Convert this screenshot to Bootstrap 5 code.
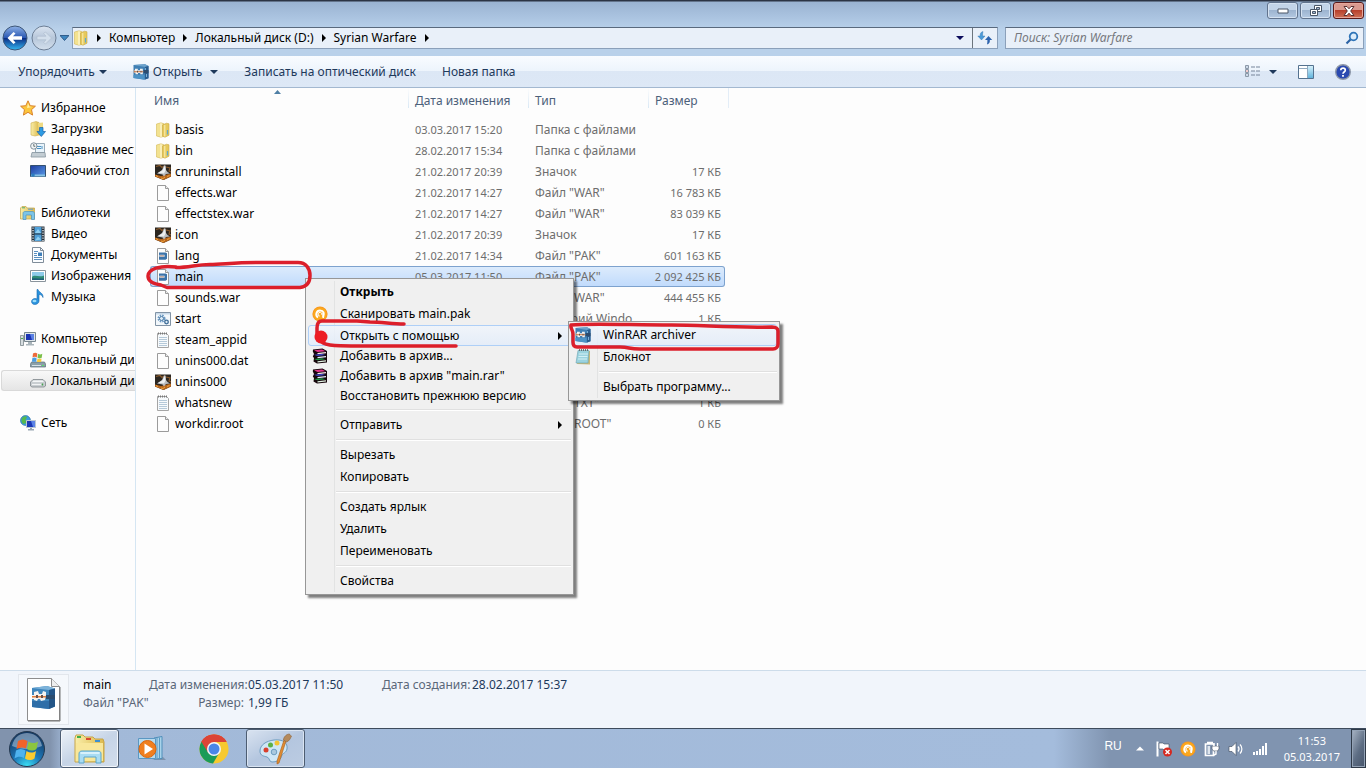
<!DOCTYPE html>
<html lang="ru">
<head>
<meta charset="utf-8">
<meta name="viewport" content="width=device-width, initial-scale=1">
<title>Syrian Warfare</title>
<link href="https://cdn.jsdelivr.net/npm/bootstrap@5.3.0/dist/css/bootstrap.min.css" rel="stylesheet">
<style>
  body { font-family: "Noto Sans", "Open Sans", sans-serif; font-size: 12px; line-height: 20px; background: #fdfdfd; color: #000; }
  svg { flex: none; display: block; }
  button { font: inherit; color: inherit; }
  .num { font-size: 11px; }

  .frame { height: 56px; background: linear-gradient(#2c3444 0 1px, #9ab3d1 2px, #a9c2df 16px, #b9d1ea 30px, #b9d1ea); }
  .win-btns { gap: 2px; padding: 2px 2px 0; }
  .win-btn { width: 31px; height: 17px; border: 1px solid #61738d; border-radius: 3px; background: linear-gradient(#c3d4e8 0 45%, #9db4d0 50%, #b4c9e2); box-shadow: inset 0 0 0 1px #d5e2f1; }
  .win-close { border-color: #5a1a1a; background: linear-gradient(#d99a90 0 45%, #b8402c 50%, #cf7258); box-shadow: inset 0 0 0 1px #e6a79b; }
  .nav-row { padding: 0 2px 5px; gap: 3px; }
  .field-box { height: 22px; background: #e9f0f9; border: 1px solid #8ba0ba; border-top-color: #59697d; }
  .crumb { color: #000; text-decoration: none; }
  .crumbs { gap: 8px; }
  .search-box { width: 359px; }
  .search-box input { background: none; border: 0; outline: 0; font-style: italic; height: 20px; }
  .search-box input::placeholder { color: #76797e; opacity: 1; }
  .round-nav { width: 26px; height: 26px; }

  .tools { height: 32px; padding: 0 15px 0 18px; gap: 26px; color: #1e395b; background: linear-gradient(#f9fcff, #edf4fc 48%, #dce7f5 50%, #dde8f6); border-bottom: 1px solid #a3b8d0; }
  .tools-right { gap: 21px; }
  .plain { background: none; border: 0; padding: 0; }

  .tree { width: 136px; border-right: 1px solid #d5e6f3; overflow: hidden; padding-top: 9px; }
  .tree a { height: 21px; color: #000; text-decoration: none; white-space: nowrap; overflow: hidden; border: 1px solid transparent; padding-left: 19px; gap: 5px; }
  .tree a.leaf { padding-left: 29px; }
  .tree a.current { margin-left: 1px; padding-left: 28px; background: linear-gradient(#f8f8f8, #e5e5e5); border-color: #d9d9d9; border-radius: 3px 0 0 3px; border-right: 0; }
  .tree-group { margin-bottom: 21px; }

  .files { width: 575px; margin-left: 14px; table-layout: fixed; border-collapse: separate; border-spacing: 0; line-height: 20px; }
  .files th { height: 31px; font-weight: 400; color: #4c607a; padding: 3px 0 0 7px; vertical-align: top; position: relative; background: linear-gradient(#fdfdfd, #d9e8f5) no-repeat 0 0 / 1px 20px; }
  .files th:first-child { padding-left: 4px; background: none; }
  .files th:last-child::after { content: ""; position: absolute; top: 0; right: -4px; width: 1px; height: 20px; background: #e3edf7; }
  .files td { height: 21px; padding: 0 0 0 7px; color: #6d6d6d; white-space: nowrap; overflow: hidden; }
  .files td:first-child { padding-left: 5px; color: #000; }
  .files td:last-child { padding: 0 4px 0 0; text-align: right; }
  .picked td { background: linear-gradient(#dcebfc, #c1dbfc); border: solid #7da2ce; border-width: 1px 0; line-height: 18px; }
  .picked td:first-child { border-left-width: 1px; padding-left: 4px; border-radius: 3px 0 0 3px; }
  .picked td:last-child { border-right-width: 1px; border-radius: 0 3px 3px 0; padding-right: 3px; }
  .sort-mark { position: absolute; left: 124px; top: 2px; }

  .ctx { --bs-dropdown-min-width: 0; border: 1px solid #979797; border-radius: 0; padding: 2px; font-size: 12px; color: #000; background: linear-gradient(#e2e3e3, #e2e3e3) no-repeat 28px 2px / 1px calc(100% - 4px), #f0f0f0; box-shadow: 3px 3px 2px rgba(0,0,0,.5); }
  .ctx-main { left: 305px; top: 190px; width: 269px; }
  .ctx-sub { left: 568px; top: 233px; width: 212px; z-index: 1001; }
  .ctx button { height: 22px; width: 100%; border: 1px solid transparent; border-radius: 3px; background: none; padding: 0 8px 0 3px; display: flex; align-items: center; white-space: nowrap; }
  .ctx .short button { height: 20px; }
  .ctx .lit button { height: 21px; border-color: #aecff7; background: linear-gradient(rgba(240,245,252,.8), rgba(226,236,250,.8)); }
  .ctx-sub .lit button { height: 22px; }
  .ctx .slot { width: 16px; margin-right: 12px; flex: none; }
  .ctx hr { margin: 3px 0 3px 28px; border: 0; height: 2px; opacity: 1; background: linear-gradient(#e0e0e0 0 1px, #fff 1px); }
  .ink { left: 0; top: 0; z-index: 1002; pointer-events: none; }

  .details { height: 58px; background: #f1f5fb; border-top: 1px solid #cddcea; color: #1e395b; }
  .details dt { font-weight: 400; color: #5a6779; text-align: right; white-space: nowrap; }
  .details dd { margin: 0; white-space: nowrap; }
  .details dl { display: grid; column-gap: 4px; grid-auto-rows: 18px; line-height: 18px; margin: 5px 0 0; }
  .dates-a { grid-template-columns: 95px 86px; }
  .dates-b { grid-template-columns: 86px auto; }
  .preview { width: 51px; height: 51px; margin: 3px 0 0 18px; border: 1px solid #e2e6ec; background: #f5f8fc; }
  .file-id { width: 66px; margin: 5px 0 0 14px; line-height: 18px; white-space: nowrap; }
  .file-kind { color: #5a6779; }

  .taskbar { height: 40px; border-top: 1px solid #3e4b5c; background: linear-gradient(90deg, #8193ad 0 50px, #a2b9d8 66px, #a4bcdc calc(100% - 312px), #8094b0 calc(100% - 256px), #8094b0); }
  .start { margin: 0 14px 0 8px; }
  .task { width: 59px; height: 39px; border: 0; background: none; padding: 0; display: flex; align-items: center; justify-content: center; }
  .task.open { border: 1px solid #4d5d72; border-radius: 3px; background: linear-gradient(150deg, #eef3f9, #c6d4e6 50%, #d3deec); box-shadow: inset 0 0 0 1px #f2f6fb; }
  .task.other { background: linear-gradient(150deg, #d9e3f0, #b4c6df 50%, #bccce2); box-shadow: inset 0 0 0 1px #d9e4f2; }
  .tasks { gap: 3px; }
  .tray { color: #fff; }
  .lang-mark { font-family: "Liberation Sans", sans-serif; margin: 0 6px 5px 0; }
  .clock { line-height: 16px; margin: 0 3px 0 8px; }
  .peek { width: 15px; height: 39px; border: 1px solid #2f3a48; background: linear-gradient(115deg, #a9b5c5, #5d6d83 55%, #46546a); box-shadow: inset 0 0 0 1px #94a3b6; padding: 0; }
</style>
</head>
<body class="vh-100 d-flex flex-column overflow-hidden">

<svg width="0" height="0" class="position-absolute" aria-hidden="true">
  <defs>
    <linearGradient id="gFold" x1="0" x2="1"><stop offset="0" stop-color="#f9eea9"/><stop offset="1" stop-color="#dcb94c"/></linearGradient>
    <linearGradient id="gScreen" x1="0" x2="1" y2="1"><stop offset="0" stop-color="#1c3ba0"/><stop offset="1" stop-color="#5b9de8"/></linearGradient>
    <linearGradient id="gGlass" x2="0" y2="1"><stop offset="0" stop-color="#d6f1fb"/><stop offset="1" stop-color="#62b4dc"/></linearGradient>
    <linearGradient id="gBall" x2="0" y2="1"><stop offset="0" stop-color="#8fb2e6"/><stop offset=".48" stop-color="#2b59b4"/><stop offset=".52" stop-color="#0b2f86"/><stop offset="1" stop-color="#35b8f2"/></linearGradient>
    <linearGradient id="gPale" x2="0" y2="1"><stop offset="0" stop-color="#dbe5f1"/><stop offset=".5" stop-color="#b7c7da"/><stop offset="1" stop-color="#d4e0ed"/></linearGradient>
    <radialGradient id="gOrb" cx=".5" cy="1" r=".9"><stop offset="0" stop-color="#3ce4f8"/><stop offset=".45" stop-color="#1e78b8"/><stop offset="1" stop-color="#143b66"/></radialGradient>
  </defs>
  <symbol id="folder" viewBox="0 0 16 16"><path d="M1.500 2 6 .8l3 1v12.400l-3 1-4.500-1.200z" fill="#f3e290" stroke="#d5ba58" stroke-width=".6"/><path d="M6 1.200V15" stroke="#fffbe0"/><path d="M7.500 3l4-1.800 2.500.6v11.400l-4 2-2.500-1z" fill="#e6c95c" stroke="#c9a845" stroke-width=".6"/><path d="M12.500 8v4.500" stroke="#5ea9d0" stroke-width="1.200"/><path d="M9.800 3v11.500" stroke="#fbf0b5"/></symbol>
  <symbol id="page" viewBox="0 0 16 16"><path d="M2.500.5h8l3 3v12h-11z" fill="#fdfdfd" stroke="#9b9b9b"/><path d="M10.500.5v3h3" fill="#ececec" stroke="#9b9b9b"/></symbol>
  <symbol id="rar" viewBox="0 0 16 16"><path d="M.5 1 12 .3l3.500 1.700v12.300l-4 1.500L.5 14z" fill="#3f7fb3"/><path d="M.5 1 12 .3l3.500 1.700-3.500 1z" fill="#6da3cc"/><path d="M.5 11h11v4.500L.5 14z" fill="#4c93c6"/><path d="M12 3l3.500-1v12.300l-3.500 1.200z" fill="#2a5d8f"/><path d="M.5 6h2v3h-2z" fill="#b9aca6"/><path d="M2 4.800h2.800v1.500H7V4.800h2.800v5.400H7.300V9H5v1.200H2.500V8.500H2z" fill="#f3f1ef"/><path d="M1 7.200h9.500v1H1z" fill="#c77a48"/><path d="M4 6.800h1v1.600H4zM7.500 6.800h1v1.600h-1z" fill="#5e4a44"/><path d="M10.500 6h5v3.200h-5z" fill="#2c4c6e"/><path d="M12.500 4v2M13.500 10v3" stroke="#79aed4"/></symbol>
  <symbol id="pak" viewBox="0 0 16 16"><use href="#page"/><path d="M4 4.500h6.500l1.500.8v5.500l-1.500 1H4z" fill="#3c73a8"/><path d="M4.500 6.800h5v2h-5z" fill="#fff"/><path d="M5 7.500h4v.8H5z" fill="#8a5a48"/></symbol>
  <symbol id="jet" viewBox="0 0 16 16"><path d="M0 .5h16v12l-7.500 3.500L0 12.500z" fill="#2b2620"/><path d="M0 10.500l6 1.500 10-2.500v3l-7.500 3.500L0 12.500z" fill="#b5651d"/><path d="M1 2.500l4-1 2 2 3-2M11 3l4 1-1 3 2 1" stroke="#8a5a2c" stroke-width="1.200" fill="none"/><path d="M2 9.500 7 6l2-4.500h1.500L11 6l1.500 2L15 9.500 11 10l-2 2.500L7.500 10.500z" fill="#b9bcc0"/><path d="M3 9l4.500-2.800 2-4h.8l.2 4.500L9 9.500z" fill="#eceeef"/><path d="M1 11.500l2 1.200M12 12.500l2.500-1M6 14l2 .5 2-1.500" stroke="#f2a33a" fill="none"/></symbol>
  <symbol id="script" viewBox="0 0 16 16"><path d="M.5 1.500h15v13H.5z" fill="#f2f7fb" stroke="#8193a5"/><path d="M1 2h14v1.500H1z" fill="#c7d8e8"/><circle cx="6.500" cy="7.500" r="3" fill="none" stroke="#6b9ac4" stroke-width="2" stroke-dasharray="1.500 .9"/><circle cx="6.500" cy="7.500" r="2" fill="#dcebf6" stroke="#4d7ba6"/><circle cx="11.500" cy="11" r="1.800" fill="#dcebf6" stroke="#3d6b96" stroke-width="1.300"/></symbol>
  <symbol id="note" viewBox="0 0 16 16"><path d="M2.500 1.500h9l2 2v12h-11z" fill="#f7fafc" stroke="#a5a5a5"/><path d="M3 1.500h9" stroke="#777" stroke-dasharray="1 1" stroke-width="2"/><path d="M4 5.500h8M4 7.500h8M4 9.500h8M4 11.500h8M4 13.500h8" stroke="#b5c9d9"/></symbol>
  <symbol id="notepad" viewBox="0 0 16 16"><path d="M4 2h11v13.500L2 15z" fill="#c9b878"/><path d="M3 1.500h11L13 14H1z" fill="#9bd3df" stroke="#6aa3b0" stroke-width=".6"/><path d="M4 1h10" stroke="#555" stroke-width="1.500" stroke-dasharray="1 1"/><path d="M4 5h9M3.500 7.500h9M3 10h9" stroke="#d3f0f5"/></symbol>
  <symbol id="star" viewBox="0 0 16 16"><path d="M8 .8l2.200 4.900 5.200.5-3.900 3.500 1.100 5.400L8 12.300l-4.600 2.800 1.100-5.400L.6 6.200l5.200-.5z" fill="#fcc63c" stroke="#d9822b"/><path d="M8 3l1.300 3.600 3 .3-5.300 1z" fill="#fff0a8"/></symbol>
  <symbol id="down" viewBox="0 0 16 16"><path d="M1 2l5-1.500 3 1V14l-4 1-4-1z" fill="url(#gFold)" stroke="#cfae4b" stroke-width=".6"/><path d="M8 2l5-.5v12l-4 1.500z" fill="#efda83"/><path d="M9.500 6.500h3.500v4h2.500l-4.200 5L7 10.500h2.500z" fill="#2e9be3" stroke="#1a62a8" stroke-width=".7"/></symbol>
  <symbol id="recent" viewBox="0 0 16 16"><path d="M5.500 1.500h9v9h-9z" fill="#e9f4fb" stroke="#97aab8"/><path d="M7 4.500h4M7 6.500h4M12 4v3" stroke="#4c93c4"/><path d="M2 10.500h13l.5 4.500H1z" fill="#c3cdd3" stroke="#8796a0" stroke-width=".8"/><circle cx="3.800" cy="4" r="3.200" fill="#f1f4f6" stroke="#84929c"/><path d="M3.800 2v2.300h1.500" stroke="#455" fill="none" stroke-width=".8"/></symbol>
  <symbol id="desk" viewBox="0 0 16 16"><path d="M.5 2.500h15v11H.5z" fill="url(#gScreen)" stroke="#33506f"/><path d="M1 11.500h14v2H1z" fill="#87c3e5"/><circle cx="3" cy="12" r="1.800" fill="#2d7dc0"/></symbol>
  <symbol id="lib" viewBox="0 0 16 16"><path d="M.5 3 2 1.500h4L7 3h7.500v11H.5z" fill="url(#gFold)" stroke="#c2a348" stroke-width=".7"/><path d="M2 2.800h3" stroke="#4fa86b"/><path d="M8 4.200h5" stroke="#5e9ad0"/><path d="M3 8.500c0-1.500 1-2 2-2h7c1.500 0 2.500.5 2.500 2v6h-3V10H6v4.500H3z" fill="#7cc4e8" stroke="#4d94bd" stroke-width=".7"/></symbol>
  <symbol id="film" viewBox="0 0 16 16"><path d="M1.500.5h13v15h-13z" fill="#26303a"/><path d="M4.500 1h7v6.500h-7zM4.500 8.500h7V15h-7z" fill="#4f9fd8"/><path d="M5 7l3-4 3 4zM5 14.500l3-4 3 3z" fill="#8fd0f2"/><path d="M3 1.500V15M13 1.500V15" stroke="#e9eef2" stroke-width="1.300" stroke-dasharray="1.300 1.200"/></symbol>
  <symbol id="doc" viewBox="0 0 16 16"><path d="M2.500.5h8l3 3v12h-11z" fill="#fbfdff" stroke="#7f8c99"/><path d="M10.500.5v3h3" fill="none" stroke="#7f8c99"/><path d="M4 4.500h4M4 6.500h3M4 8.500h3M4 10.500h8M4 12.500h8" stroke="#5a8fbf"/><path d="M8 5.500h4v3.500H8z" fill="#3f7fb9"/></symbol>
  <symbol id="pic" viewBox="0 0 16 16"><path d="M.5 2.500h15v11H.5z" fill="#fff" stroke="#8a949c"/><path d="M2 4h12v8H2z" fill="#8ecbe9"/><path d="M2 9c3-3 7 1 12-1.500V12H2z" fill="#2f8c76"/><path d="M2 10.500c4-1 8 .5 12 0V12H2z" fill="#1e5d79"/></symbol>
  <symbol id="music" viewBox="0 0 16 16"><path d="M8 .5c1 3 5.500 3.500 5 8-1-2.500-2.500-3-4-3v6.500c0 2-2 3.500-4.200 3.500S1.500 14 1.500 12.500 3 9.500 5 9.500c1 0 1.500.2 2 .5V.5z" fill="#2b93dd" stroke="#1668b0" stroke-width=".6"/><ellipse cx="4.500" cy="12" rx="2" ry="1.200" fill="#9bdcfa"/></symbol>
  <symbol id="pc" viewBox="0 0 16 16"><path d="M.5 4.500h3v10h-3z" fill="#d7dde0" stroke="#7b868c" stroke-width=".8"/><path d="M1 7.500h2" stroke="#48b04c"/><path d="M4.500 1.500h11v9h-11z" fill="#dfe6ea" stroke="#78868f"/><path d="M6 3h8v6H6z" fill="#1c34b4"/><path d="M10 3h4v6h-2z" fill="#5a80e4"/><path d="M8 11h4v2h2v1.500H6V13h2z" fill="#aab5bb"/></symbol>
  <symbol id="windrive" viewBox="0 0 16 16"><path d="M1.500 10h13l1 2v3H.5v-3z" fill="#8ba0a8" stroke="#5d6f78" stroke-width=".7"/><path d="M2 13.500h9" stroke="#d6e3e8"/><path d="M12 13.500h2" stroke="#59e06b"/><path d="M3 1.500c1.500-1 3-1 4.300 0L6.800 5.500c-1.500-1-2.800-.8-4.300 0z" fill="#ee6b3b"/><path d="M8 1.800c1.500.9 2.800.8 4.300 0l-.6 4c-1.500.8-2.800.8-4.200 0z" fill="#7cc04a"/><path d="M2.300 6.200c1.500-.8 3-.8 4.400.2l-.5 3.300H2z" fill="#4a9de0"/><path d="M7.400 6.500c1.500.8 2.800.8 4.200 0l-.5 3.500H7z" fill="#f8ca3d"/></symbol>
  <symbol id="drive" viewBox="0 0 16 16"><path d="M.5 9 3 6.500h10L15.500 9v4L14 14H2L.5 13z" fill="#c9ced1" stroke="#7f868b" stroke-width=".8"/><path d="M2 9l1.500-1.500h9L14 9z" fill="#f4f6f7"/><path d="M2 11.500h9" stroke="#f1f3f4"/><path d="M12.500 10.500v2" stroke="#46a14e" stroke-width="1.400"/></symbol>
  <symbol id="net" viewBox="0 0 16 16"><circle cx="5.500" cy="5.500" r="5" fill="#3a9bdc" stroke="#2368a0" stroke-width=".6"/><path d="M2 3c2-2 4-2 5-1L5.500 5l1 3-3 1C1.500 8 1 5 2 3z" fill="#55b94d"/><path d="M6.500 5.500h9v7h-9z" fill="#1b38b5" stroke="#bcc8d2"/><path d="M11 6h4v6h-2z" fill="#5b83e6"/><path d="M10 13h2v1h2v1.500H8V14h2z" fill="#9aa8b3"/></symbol>
  <symbol id="avast" viewBox="0 0 16 16"><circle cx="8" cy="8" r="7.600" fill="#f7941d"/><circle cx="8" cy="8" r="6.800" fill="#fba81e"/><path d="M6 11.500C3 9.500 4.200 4.500 8 4.500s4.500 3 3.200 6.500" fill="none" stroke="#fff" stroke-width="2"/><path d="M11.200 7v5" stroke="#fff" stroke-width="1.600"/><path d="M9.800 8.800a1.900 1.900 0 1 0-2 1.300" fill="none" stroke="#fff" stroke-width="1"/></symbol>
  <symbol id="books" viewBox="0 0 16 16"><path d="M1 1.500 10.500.5 15 3v11.500l-10 1-3.500-2L2 10 .8 8.500 2 6 .8 3.500z" fill="#16060c"/><path d="M2 2.300 10 1.500l3.500 1.700-8 .8z" fill="#e0348a"/><path d="M5.500 5 14 4v1.300l-8.500 1z" fill="#f3e6ee"/><path d="M2 6.800 10 6l3.500 1-8 1z" fill="#3f48c8"/><path d="M5.500 9 14 8v1.300l-8.500 1z" fill="#e6e9fb"/><path d="M2 11l8-.8 3.500 1-8 1z" fill="#1f9a48"/><path d="M5.500 13.200 14 12.200v1.300l-8.500 1z" fill="#e3f3e4"/></symbol>
  <symbol id="caret" viewBox="0 0 8 4"><path d="M0 0h8L4 4z" fill="currentColor"/></symbol>
  <symbol id="tri" viewBox="0 0 4 8"><path d="M0 0v8l4-4z" fill="currentColor"/></symbol>
</svg>

<header class="frame d-flex flex-column">
  <div class="win-btns d-flex justify-content-end">
    <button class="win-btn d-flex align-items-center justify-content-center p-0" aria-label="Свернуть"><svg width="12" height="6"><path d="M1 1h10v4H1z" fill="#fff" stroke="#4a5768"/></svg></button>
    <button class="win-btn d-flex align-items-center justify-content-center p-0" aria-label="Восстановить"><svg width="12" height="11"><path d="M4.500.5h7v6h-7z" fill="#fff" stroke="#4a5768"/><path d="M6.500 2.500h3v2h-3z" fill="#9db4d0" stroke="#4a5768"/><path d="M.5 4.500h7v6h-7z" fill="#fff" stroke="#4a5768"/><path d="M2.500 6.500h3v2h-3z" fill="#9db4d0" stroke="#4a5768"/></svg></button>
    <button class="win-btn win-close d-flex align-items-center justify-content-center p-0" aria-label="Закрыть"><svg width="12" height="10"><path d="M1 .5h3l2 2.300L8 .5h3L7.700 5 11 9.500H8L6 7.200 4 9.500H1L4.300 5z" fill="#fff" stroke="#5b3030"/></svg></button>
  </div>
  <div class="nav-row d-flex align-items-center mt-auto">
    <button class="round-nav plain" aria-label="Назад"><svg width="26" height="26"><circle cx="13" cy="13" r="12" fill="url(#gBall)" stroke="#3d5677"/><path d="M5.500 13l6-6 2 1.500-2.500 2.700h9v3.600h-9l2.500 2.700-2 1.500z" fill="#fff"/></svg></button>
    <button class="round-nav plain" aria-label="Вперёд"><svg width="26" height="26"><circle cx="13" cy="13" r="12" fill="url(#gPale)" stroke="#6c7e95"/><path d="M20.500 13l-6-6-2 1.500 2.500 2.700H6v3.600h9l-2.500 2.700 2 1.500z" fill="#d3dfec" stroke="#b0bfd0" stroke-width=".7"/></svg></button>
    <button class="plain" aria-label="Последние страницы"><svg width="9" height="6"><path d="M0 .5h9L4.500 5.500z" fill="#3d86c0" stroke="#1f4a78" stroke-width=".8"/></svg></button>
    <div class="field-box d-flex align-items-center flex-grow-1">
      <svg width="16" height="16" class="me-1"><use href="#folder"/></svg>
      <nav class="crumbs d-flex align-items-center ms-1" aria-label="Адрес">
        <svg width="4" height="8"><use href="#tri"/></svg><a class="crumb" href="#">Компьютер</a>
        <svg width="4" height="8"><use href="#tri"/></svg><a class="crumb" href="#">Локальный диск (D:)</a>
        <svg width="4" height="8"><use href="#tri"/></svg><a class="crumb" href="#">Syrian Warfare</a>
        <svg width="4" height="8"><use href="#tri"/></svg>
      </nav>
      <button class="plain ms-auto me-1 pe-1" style="color:#0c0c5c" aria-label="История"><svg width="8" height="4"><use href="#caret"/></svg></button>
      <button class="plain border-start border-secondary px-1 h-100" aria-label="Обновить"><svg width="16" height="16"><path d="M6 1.500C3.500 2 3 4 3.200 6H.8l3.700 4L8 6H5.600c0-1.500 0-3 .4-4.500z" fill="#4a9ad8" stroke="#2f6fa8" stroke-width=".4"/><path d="M10 14.500c2.500-.5 3-2.500 2.800-4.500h2.400l-3.700-4L8 10h2.400c0 1.500 0 3-.4 4.500z" fill="#2c62ad"/></svg></button>
    </div>
    <div class="field-box search-box d-flex align-items-center ms-1">
      <input class="flex-grow-1 ps-2" type="search" aria-label="Поиск" placeholder="Поиск: Syrian Warfare">
      <svg width="14" height="14" class="me-1"><circle cx="8.500" cy="5.500" r="3.800" fill="#dcecfa" stroke="#2e74b8" stroke-width="1.800"/><path d="M5.500 8.500 1.500 12.500" stroke="#2a62a4" stroke-width="2.200"/></svg>
    </div>
  </div>
</header>

<div class="tools d-flex align-items-center">
  <button class="plain d-flex align-items-center">Упорядочить<svg width="8" height="4" class="ms-1"><use href="#caret"/></svg></button>
  <button class="plain d-flex align-items-center"><svg width="16" height="16" class="me-1"><use href="#rar"/></svg>Открыть<svg width="8" height="4" class="ms-2"><use href="#caret"/></svg></button>
  <button class="plain">Записать на оптический диск</button>
  <button class="plain">Новая папка</button>
  <div class="tools-right d-flex align-items-center ms-auto">
    <button class="plain d-flex align-items-center" aria-label="Вид"><svg width="16" height="13" class="me-2"><path d="M.5.5h3v3h-3zM.5 4.500h3v3h-3zM.5 8.500h3v3h-3z" fill="#fff" stroke="#8b98a8"/><path d="M1.500 2h1M1.500 10h1" stroke="#3b6ea5"/><path d="M1.500 6h1" stroke="#c33"/><path d="M6 2h4M11 2h4M6 6h4M11 6h4M6 10h4M11 10h4" stroke="#76859a"/></svg><svg width="8" height="4"><use href="#caret"/></svg></button>
    <button class="plain" aria-label="Область просмотра"><svg width="16" height="14"><path d="M.5.5h15v13H.5z" fill="#fff" stroke="#54728f"/><path d="M10 1h5v12h-5z" fill="url(#gGlass)"/><path d="M9.500 1v12M1 3.500h9" stroke="#8fa9bf"/></svg></button>
    <button class="plain" aria-label="Справка"><svg width="16" height="16"><circle cx="8" cy="8" r="7.300" fill="#2a49b0" stroke="#8e98a8" stroke-width="1.400"/><path d="M5.800 6.300C5.800 3.400 10.300 3.500 10.300 6.200 10.300 8 8 8 8 9.800" fill="none" stroke="#fff" stroke-width="1.700"/><path d="M8 11v1.800" stroke="#fff" stroke-width="1.800"/></svg></button>
  </div>
</div>

<main class="position-relative d-flex flex-grow-1" style="min-height:0">
  <nav class="tree flex-shrink-0" aria-label="Область переходов">
    <div class="tree-group">
      <a href="#" class="d-flex align-items-center"><svg width="16" height="16"><use href="#star"/></svg>Избранное</a>
      <a href="#" class="leaf d-flex align-items-center"><svg width="16" height="16"><use href="#down"/></svg>Загрузки</a>
      <a href="#" class="leaf d-flex align-items-center"><svg width="16" height="16"><use href="#recent"/></svg>Недавние места</a>
      <a href="#" class="leaf d-flex align-items-center"><svg width="16" height="16"><use href="#desk"/></svg>Рабочий стол</a>
    </div>
    <div class="tree-group">
      <a href="#" class="d-flex align-items-center"><svg width="16" height="16"><use href="#lib"/></svg>Библиотеки</a>
      <a href="#" class="leaf d-flex align-items-center"><svg width="16" height="16"><use href="#film"/></svg>Видео</a>
      <a href="#" class="leaf d-flex align-items-center"><svg width="16" height="16"><use href="#doc"/></svg>Документы</a>
      <a href="#" class="leaf d-flex align-items-center"><svg width="16" height="16"><use href="#pic"/></svg>Изображения</a>
      <a href="#" class="leaf d-flex align-items-center"><svg width="16" height="16"><use href="#music"/></svg>Музыка</a>
    </div>
    <div class="tree-group">
      <a href="#" class="d-flex align-items-center"><svg width="16" height="16"><use href="#pc"/></svg>Компьютер</a>
      <a href="#" class="leaf d-flex align-items-center"><svg width="16" height="16"><use href="#windrive"/></svg>Локальный диск (C:)</a>
      <a href="#" class="leaf current d-flex align-items-center"><svg width="16" height="16"><use href="#drive"/></svg>Локальный диск (D:)</a>
    </div>
    <div>
      <a href="#" class="d-flex align-items-center"><svg width="16" height="16"><use href="#net"/></svg>Сеть</a>
    </div>
  </nav>

  <div class="flex-grow-1">
    <table class="files">
      <colgroup><col style="width:258px"><col style="width:120px"><col style="width:120px"><col style="width:77px"></colgroup>
      <thead><tr><th>Имя<svg class="sort-mark" width="7" height="4"><path d="M0 4h7L3.500 0z" fill="#4f7fa5"/></svg></th><th>Дата изменения</th><th>Тип</th><th>Размер</th></tr></thead>
      <tbody>
        <tr><td><div class="d-flex align-items-center gap-1"><svg width="16" height="16"><use href="#folder"/></svg>basis</div></td><td class="num">03.03.2017 15:20</td><td>Папка с файлами</td><td class="num"></td></tr>
        <tr><td><div class="d-flex align-items-center gap-1"><svg width="16" height="16"><use href="#folder"/></svg>bin</div></td><td class="num">28.02.2017 15:34</td><td>Папка с файлами</td><td class="num"></td></tr>
        <tr><td><div class="d-flex align-items-center gap-1"><svg width="16" height="16"><use href="#jet"/></svg>cnruninstall</div></td><td class="num">21.02.2017 20:39</td><td>Значок</td><td class="num">17 КБ</td></tr>
        <tr><td><div class="d-flex align-items-center gap-1"><svg width="16" height="16"><use href="#page"/></svg>effects.war</div></td><td class="num">21.02.2017 14:27</td><td>Файл "WAR"</td><td class="num">16 783 КБ</td></tr>
        <tr><td><div class="d-flex align-items-center gap-1"><svg width="16" height="16"><use href="#page"/></svg>effectstex.war</div></td><td class="num">21.02.2017 14:27</td><td>Файл "WAR"</td><td class="num">83 039 КБ</td></tr>
        <tr><td><div class="d-flex align-items-center gap-1"><svg width="16" height="16"><use href="#jet"/></svg>icon</div></td><td class="num">21.02.2017 20:39</td><td>Значок</td><td class="num">17 КБ</td></tr>
        <tr><td><div class="d-flex align-items-center gap-1"><svg width="16" height="16"><use href="#pak"/></svg>lang</div></td><td class="num">21.02.2017 14:34</td><td>Файл "PAK"</td><td class="num">601 163 КБ</td></tr>
        <tr class="picked"><td><div class="d-flex align-items-center gap-1"><svg width="16" height="16"><use href="#pak"/></svg>main</div></td><td class="num">05.03.2017 11:50</td><td>Файл "PAK"</td><td class="num">2 092 425 КБ</td></tr>
        <tr><td><div class="d-flex align-items-center gap-1"><svg width="16" height="16"><use href="#page"/></svg>sounds.war</div></td><td class="num"></td><td>Файл "WAR"</td><td class="num">444 455 КБ</td></tr>
        <tr><td><div class="d-flex align-items-center gap-1"><svg width="16" height="16"><use href="#script"/></svg>start</div></td><td class="num"></td><td>Сценарий Windo</td><td class="num">1 КБ</td></tr>
        <tr><td><div class="d-flex align-items-center gap-1"><svg width="16" height="16"><use href="#note"/></svg>steam_appid</div></td><td></td><td></td><td></td></tr>
        <tr><td><div class="d-flex align-items-center gap-1"><svg width="16" height="16"><use href="#page"/></svg>unins000.dat</div></td><td></td><td></td><td></td></tr>
        <tr><td><div class="d-flex align-items-center gap-1"><svg width="16" height="16"><use href="#jet"/></svg>unins000</div></td><td></td><td></td><td></td></tr>
        <tr><td><div class="d-flex align-items-center gap-1"><svg width="16" height="16"><use href="#note"/></svg>whatsnew</div></td><td></td><td>Файл "TXT"</td><td class="num">1 КБ</td></tr>
        <tr><td><div class="d-flex align-items-center gap-1"><svg width="16" height="16"><use href="#page"/></svg>workdir.root</div></td><td></td><td>Файл "ROOT"</td><td class="num">0 КБ</td></tr>
      </tbody>
    </table>
  </div>

  <ul class="dropdown-menu show ctx ctx-main">
    <li><button class="fw-bold"><span class="slot"></span>Открыть</button></li>
    <li><button><span class="slot"><svg width="16" height="16"><use href="#avast"/></svg></span>Сканировать main.pak</button></li>
    <li class="lit"><button><span class="slot"></span>Открыть с помощью<svg width="4" height="8" class="ms-auto"><use href="#tri"/></svg></button></li>
    <li class="short"><button><span class="slot"><svg width="16" height="16"><use href="#books"/></svg></span>Добавить в архив...</button></li>
    <li class="short"><button><span class="slot"><svg width="16" height="16"><use href="#books"/></svg></span>Добавить в архив "main.rar"</button></li>
    <li class="short"><button><span class="slot"></span>Восстановить прежнюю версию</button></li>
    <li><hr></li>
    <li><button><span class="slot"></span>Отправить<svg width="4" height="8" class="ms-auto"><use href="#tri"/></svg></button></li>
    <li><hr></li>
    <li><button><span class="slot"></span>Вырезать</button></li>
    <li><button><span class="slot"></span>Копировать</button></li>
    <li><hr></li>
    <li><button><span class="slot"></span>Создать ярлык</button></li>
    <li><button><span class="slot"></span>Удалить</button></li>
    <li><button><span class="slot"></span>Переименовать</button></li>
    <li><hr></li>
    <li><button><span class="slot"></span>Свойства</button></li>
  </ul>
  <ul class="dropdown-menu show ctx ctx-sub">
    <li class="lit"><button><span class="slot"><svg width="16" height="16"><use href="#rar"/></svg></span>WinRAR archiver</button></li>
    <li><button><span class="slot"><svg width="16" height="16"><use href="#notepad"/></svg></span>Блокнот</button></li>
    <li><hr></li>
    <li><button><span class="slot"></span>Выбрать программу...</button></li>
  </ul>

  <!-- hand-drawn red marker strokes over the list and the menus -->
  <svg class="ink position-absolute" width="800" height="300" fill="none" stroke="#dc1f2b" stroke-width="3.500" stroke-linecap="round" stroke-linejoin="round">
    <path d="M176 179C160 177 148 181 148 188c0 6 6 8 13 9l6 2.500H300c7-1 10-6 10-12 0-7-4-13-12-13H258c-24 0-36 2-48 2-14 0-20 3-34 3"/>
    <path d="M404 236c-12 0-22-2-34-2l-13-1H322c-4 0-5 3-5 7v10l6 5c8 4 16 2 28 3h105"/>
    <ellipse cx="321" cy="249" rx="6.500" ry="6.500" fill="#ed1c24" stroke="none"/>
    <path d="M571 237c20-2 60 0 100 0 32 0 60 3 101 2 4 0 6 2 6 4v13c0 3-2 5-5 5H640c-12 0-10-2-20-2h-43c-3 0-4-2-4-5v-8c0-4-3-6-2-9z"/>
  </svg>
</main>

<footer class="details d-flex flex-shrink-0">
  <div class="preview d-flex align-items-center justify-content-center">
    <svg width="34" height="44"><path d="M.5.5h24l8 8v34H.5z" fill="#fff" stroke="#8d8d8d"/><path d="M1 43h32V9" stroke="#777" fill="none"/><path d="M24.500.5v8h8" fill="#eee" stroke="#8d8d8d"/><path d="M5 10l15-2 8 2.500v18L22 31 5 29z" fill="#3f86bd"/><path d="M5 10l15-2 8 2.500-6 1.500z" fill="#7db3da"/><path d="M22 12l6-1.500v18L22 31z" fill="#235587"/><path d="M5 23h17v8L5 29z" fill="#2e6ea8"/><path d="M5 17h2v4H5zM7 14l4-1 1 3h3l1-3 3 1v3l-1 5-4 1-1-2h-2l-1 2-3-1z" fill="#f4f2f0"/><path d="M5 18h14v1.500H5z" fill="#df7b3b"/><path d="M9 17h2v3H9zM14 17h2v3h-2z" fill="#6a5048"/><path d="M19 17h9v4h-9z" fill="#2c4c6e"/></svg>
  </div>
  <div class="file-id"><div class="text-black">main</div><div class="file-kind">Файл "PAK"</div></div>
  <dl class="dates-a"><dt>Дата изменения:</dt><dd>05.03.2017 11:50</dd><dt>Размер:</dt><dd>1,99 ГБ</dd></dl>
  <dl class="dates-b ms-5"><dt>Дата создания:</dt><dd>28.02.2017 15:37</dd></dl>
</footer>

<div class="taskbar d-flex align-items-center flex-shrink-0">
  <button class="plain start" aria-label="Пуск"><svg width="38" height="38"><circle cx="19" cy="19" r="17.500" fill="url(#gOrb)" stroke="#24384f"/><path d="M4 16C6 6 13 3 19 3s13 3 15 13c-9 4-21 4-30 0z" fill="#b5cbe0" opacity=".55"/><path d="M10 11c3-2 6.500-2 9.500 0L18 18.500c-3.500-1.500-6.500-1-9.500.5z" fill="#f0632a"/><path d="M20.500 11.500c3 2 6.500 2 9.500 0L28.500 19c-3 2-6.500 2-9.500 0z" fill="#8cc63f"/><path d="M8 20.500c3-2 6.500-2 9.500 0L16 28c-3.500-2-6.500-1.500-9.500.5z" fill="#4fb3ee"/><path d="M18.500 21c3 2 6.500 2 9.500 0l-1.500 7.500c-3 2-6.500 2-9.500 0z" fill="#fccb2f"/></svg></button>
  <div class="tasks d-flex">
    <button class="task open" aria-label="Проводник"><svg width="34" height="32"><path d="M2 5l1-3h7l2 2h8l2 2h8l1 3v20H2z" fill="url(#gFold)" stroke="#c7a447"/><path d="M4 4h4" stroke="#3fae49" stroke-width="2"/><path d="M13 6h5" stroke="#d9482f" stroke-width="2"/><path d="M22 8h5" stroke="#3c8fd0" stroke-width="2"/><path d="M3 10h27v18H3z" fill="#f8e79a"/><path d="M6 21c0-2 1-3 3-3h16c2 0 3 1 3 3v9h-5v-6H11v6H6z" fill="#a9dcf3" stroke="#5ba6cb"/><path d="M7.500 20h19" stroke="#e9f8fe" stroke-width="1.500"/></svg></button>
    <button class="task" aria-label="Проигрыватель"><svg width="30" height="28"><path d="M15 25h14l-3-3z" fill="#7d93ae"/><path d="M17 3l8-1.500v22L17 24z" fill="#a9d3ea" stroke="#4f8fba"/><path d="M20 3v20M22.500 2.500v21" stroke="#5a9ac4"/><path d="M1.500 3.500h17v20h-17z" fill="#b7dbee" stroke="#5a97c2"/><circle cx="10.500" cy="14" r="8.500" fill="#f07f1f" stroke="#d8670f"/><path d="M7.500 8.500l8.500 5.500-8.500 5.500z" fill="#fff"/></svg></button>
    <button class="task" aria-label="Chrome"><svg width="30" height="30" viewBox="0 0 30 30"><circle cx="15" cy="15" r="14.500" fill="#f7c92f"/><path d="M15 15 2.400 7.800A14.500 14.500 0 0 1 27.600 7.800H15z" fill="#dc4437"/><path d="M2.400 7.800A14.500 14.500 0 0 0 14 29.500l6.500-11.300L15 15z" fill="#1a9b58"/><path d="M2.400 7.800 9 18.500 15 8h12.600A14.500 14.500 0 0 0 2.400 7.800z" fill="#dc4437"/><circle cx="15" cy="15" r="7" fill="#f4f6f8"/><circle cx="15" cy="15" r="5.500" fill="#4a86e8"/></svg></button>
    <button class="task open other" aria-label="Paint"><svg width="34" height="32"><path d="M15 7c9-1 14 3 13 9-1 4-4 4-5 6-1 4-4 7-10 7-3 0-2-4-5-5S1 23 1 18C1 12 7 8 15 7z" fill="#cfe6f5" stroke="#6d9dc0"/><circle cx="7" cy="17" r="2.500" fill="#d8402e"/><circle cx="11.500" cy="12" r="2.500" fill="#5bb046"/><circle cx="18" cy="10" r="2.500" fill="#f3c433"/><circle cx="15" cy="19" r="2.800" fill="#a9c8de" stroke="#6d9dc0"/><path d="M27 8 20 30l-2 1v-3l7-21z" fill="#e08b32" stroke="#a85f1a" stroke-width=".6"/><path d="M24.500 7c0-3 3-6 6-6 0 1 2 2 2 2-1 2-2 5-5 6z" fill="#b58a5c" stroke="#8b6339" stroke-width=".6"/></svg></button>
  </div>
  <div class="tray d-flex align-items-center ms-auto gap-2">
    <span class="lang-mark">RU</span>
    <svg width="8" height="5" class="me-1"><path d="M0 4.500h8L4 .5z" fill="#fff"/></svg>
    <svg width="16" height="16"><path d="M1.500.5v15" stroke="#fff" stroke-width="2"/><path d="M3 2h4l1 1h5v6H8L7 8H3z" fill="#fff" stroke="#39475a" stroke-width=".6"/><circle cx="11.500" cy="11" r="4.500" fill="#d6281f"/><path d="M9.500 9l4 4M13.500 9l-4 4" stroke="#fff" stroke-width="1.500"/></svg>
    <svg width="16" height="16"><use href="#avast"/></svg>
    <svg width="16" height="16"><path d="M3 1.500h6M1.500 3h8v11.500h-8z" fill="none" stroke="#fff" stroke-width="1.700"/><path d="M3.500 5h2.500v8H3.500z" fill="#dfe6ee"/><path d="M8 5h7v3l-1.500 2h-4L8 8z" fill="#fff" stroke="#39475a" stroke-width=".6"/><path d="M10 2v3M13.500 2v3M12 10v3l-3 1.500" stroke="#fff" stroke-width="1.400" fill="none"/></svg>
    <svg width="16" height="16"><path d="M1 5.500h3l4-4v13l-4-4H1z" fill="#fff" stroke="#39475a" stroke-width=".6"/><path d="M10 5.500c1.300 1.500 1.300 3.500 0 5M12 3.500c2.500 2.500 2.500 6.500 0 9" fill="none" stroke="#fff" stroke-width="1.200"/></svg>
    <svg width="16" height="16"><path d="M1 11h2v3H1zM4 10h2v4H4zM7 8h2v6H7zM10 5h2v9h-2zM13 2h2v12h-2z" fill="#fff"/></svg>
    <div class="clock text-center num">11:53<br>05.03.2017</div>
    <button class="peek" aria-label="Показать рабочий стол"></button>
  </div>
</div>

<script src="https://cdn.jsdelivr.net/npm/bootstrap@5.3.0/dist/js/bootstrap.bundle.min.js"></script>
</body>
</html>
